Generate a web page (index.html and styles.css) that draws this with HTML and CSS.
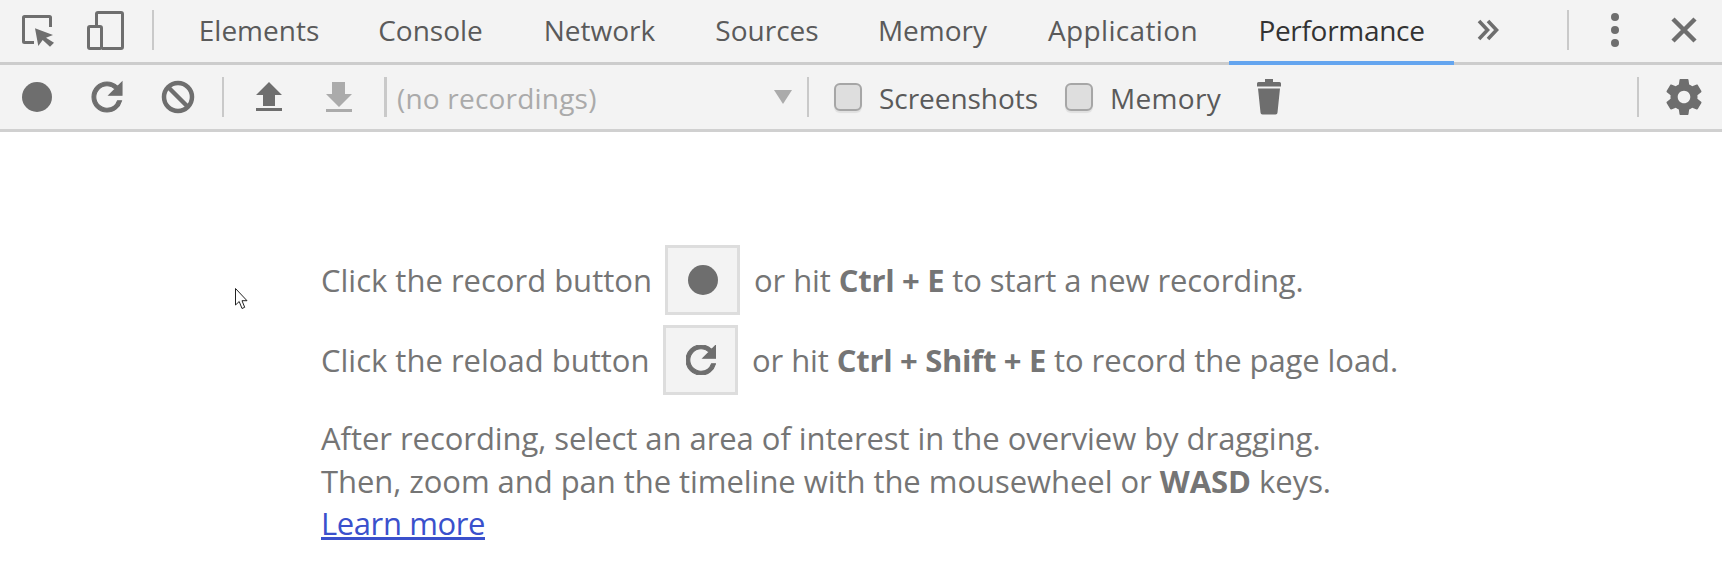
FILE: index.html
```html
<!DOCTYPE html>
<html lang="en">
<head>
<meta charset="utf-8">
<title>DevTools Performance</title>
<link rel="stylesheet" href="styles.css">
</head>
<body>
<header class="tabbar">
  <svg class="icon inspect" viewBox="0 0 40 40" width="40" height="40"><path class="line" d="M14 31.500H4.500A1 1 0 0 1 3.500 30.500V6.500A1 1 0 0 1 4.500 5.500H29.500A1 1 0 0 1 30.500 6.500V16"/><path class="fill" d="M15 17.300L33 24 26 26.700 34 31.700 30 35.700 22.700 29 18.300 35z"/></svg>
  <svg class="icon device" viewBox="0 0 40 40" width="40" height="40"><path class="line" d="M11.500 15V3A1.500 1.500 0 0 1 13 1.500H36A1.500 1.500 0 0 1 37.500 3V36A1.500 1.500 0 0 1 36 37.500H17"/><rect class="line" x="3.500" y="15.500" width="13" height="22" rx="1.500"/></svg>
  <span class="sep sep-head"></span>
  <nav class="tabs">
    <span class="tab">Elements</span>
    <span class="tab">Console</span>
    <span class="tab">Network</span>
    <span class="tab">Sources</span>
    <span class="tab">Memory</span>
    <span class="tab tab-wide">Application</span>
    <span class="tab active">Performance</span>
  </nav>
  <svg class="icon more" viewBox="0 0 24 24" width="24" height="24"><path class="line chev" d="M3 3l8.500 9L3 21M12 3l8.500 9L12 21"/></svg>
  <span class="sep sep-more"></span>
  <svg class="icon dots" viewBox="0 0 10 36" width="10" height="36"><circle class="fill" cx="5" cy="4" r="4"/><circle class="fill" cx="5" cy="17" r="4"/><circle class="fill" cx="5" cy="30" r="4"/></svg>
  <svg class="icon close" viewBox="0 0 26 26" width="26" height="26"><path class="line x" d="M2 2l22 22M24 2L2 24"/></svg>
</header>

<section class="toolbar">
  <svg class="icon t-record" viewBox="0 0 30 30" width="30" height="30"><circle class="fill" cx="15" cy="15" r="15"/></svg>
  <svg class="icon t-reload" viewBox="4 4 16 16" width="30" height="30"><path class="fill bold" d="M17.650 6.350A7.958 7.958 0 0 0 12 4c-4.420 0-7.990 3.580-7.990 8s3.570 8 7.990 8c3.730 0 6.840-2.550 7.730-6h-2.080A5.990 5.990 0 0 1 12 18c-3.310 0-6-2.690-6-6s2.690-6 6-6c1.660 0 3.140.690 4.220 1.780L13 11h7V4l-2.350 2.350z"/></svg>
  <svg class="icon t-clear" viewBox="0 0 32 32" width="32" height="32"><circle class="line ring" cx="16" cy="16" r="14"/><path class="line ring" d="M6 6l20 20"/></svg>
  <span class="sep sep-a"></span>
  <svg class="icon t-up" viewBox="0 0 26 29" width="26" height="29"><path class="fill" d="M13 0L26 13H19V24H7V13H0z"/><rect class="fill" y="26" width="26" height="3"/></svg>
  <svg class="icon t-down" viewBox="0 0 26 30" width="26" height="30"><path class="fill-off" d="M6 0H19V12H26L13 25 0 12H6z"/><rect class="fill-off" y="27" width="26" height="3"/></svg>
  <div class="select">
    <span class="select-text">(no recordings)</span>
    <span class="select-arrow"></span>
  </div>
  <span class="sep sep-b"></span>
  <label class="check check-a"><input type="checkbox"><span>Screenshots</span></label>
  <label class="check check-b"><input type="checkbox"><span class="check-wide">Memory</span></label>
  <svg class="icon t-trash" viewBox="0 0 24 36" width="24" height="36"><path class="fill" d="M8 0H16V3H22.500A1.500 1.500 0 0 1 24 4.500V7.500H0V4.500A1.500 1.500 0 0 1 1.500 3H8z"/><path class="fill" d="M1 9.500H23L20.500 33.500A2 2 0 0 1 18.500 35.500H5.500A2 2 0 0 1 3.500 33.500z"/></svg>
  <span class="sep sep-c"></span>
  <svg class="icon t-gear" viewBox="2.200 2 19.600 20" width="36" height="36"><path class="fill" d="M19.430 12.980c.04-.32.07-.64.07-.98s-.03-.66-.07-.98l2.110-1.650c.19-.15.24-.42.12-.64l-2-3.460c-.12-.22-.39-.3-.61-.22l-2.490 1c-.52-.4-1.080-.73-1.690-.98l-.38-2.650C14.460 2.180 14.250 2 14 2h-4c-.25 0-.46.18-.49.42l-.38 2.650c-.61.25-1.170.59-1.690.98l-2.490-1c-.23-.09-.49 0-.61.22l-2 3.460c-.13.22-.07.49.12.64l2.110 1.650c-.04.32-.07.65-.07.98s.03.66.07.98l-2.110 1.650c-.19.15-.24.42-.12.64l2 3.460c.12.22.39.3.61.22l2.490-1c.52.4 1.080.73 1.690.98l.38 2.650c.03.24.24.42.49.42h4c.25 0 .46-.18.49-.42l.38-2.650c.61-.25 1.170-.59 1.690-.98l2.490 1c.23.09.49 0 .61-.22l2-3.460c.12-.22.07-.49-.12-.64l-2.110-1.650zM12 15.500c-1.930 0-3.500-1.570-3.500-3.500s1.570-3.500 3.500-3.500 3.500 1.570 3.500 3.500-1.570 3.500-3.500 3.500z"/></svg>
</section>

<main class="landing">
  <div class="hint hint-record">
    <span class="lead">Click the record button</span>
    <span class="keybtn"><svg viewBox="0 0 30 30" width="30" height="30"><circle class="fill" cx="15" cy="15" r="15"/></svg></span>
    <span>or hit <b>Ctrl + E</b> to start a new recording.</span>
  </div>
  <div class="hint hint-reload">
    <span class="lead">Click the reload button</span>
    <span class="keybtn"><svg viewBox="4 4 16 16" width="30" height="30"><path class="fill bold" d="M17.650 6.350A7.958 7.958 0 0 0 12 4c-4.420 0-7.990 3.580-7.990 8s3.570 8 7.990 8c3.730 0 6.840-2.550 7.730-6h-2.080A5.990 5.990 0 0 1 12 18c-3.310 0-6-2.690-6-6s2.690-6 6-6c1.660 0 3.140.690 4.220 1.780L13 11h7V4l-2.350 2.350z"/></svg></span>
    <span>or hit <b>Ctrl + Shift + E</b> to record the page load.</span>
  </div>
  <p class="note">After recording, select an area of interest in the overview by dragging.<br>Then, zoom and pan the timeline with the mousewheel or <b>WASD</b> keys.<br><a href="#">Learn more</a></p>
</main>

<svg class="cursor" viewBox="0 0 13 22" width="13" height="22"><path d="M.5.500V17L4.200 13.500 7 20.500 9.700 19.300 7 12.700H12z"/></svg>
</body>
</html>
```
FILE: styles.css
```css
* { box-sizing: border-box; }
html, body { margin: 0; height: 100%; background: #fff; overflow: hidden; }
body { font-family: "Open Sans", "Liberation Sans", sans-serif; position: relative; }

.icon { display: block; flex: none; overflow: visible; }
.fill { fill: #6e6e6e; }
.fill.bold { stroke: #6e6e6e; stroke-width: .6; }
.fill-off { fill: #ababab; }
.line { fill: none; stroke: #6e6e6e; stroke-width: 3; }
.line.chev { stroke-width: 3.6; }
.line.x { stroke-width: 4.5; }
.line.ring { stroke-width: 4.5; }
.sep { display: block; flex: none; width: 2px; height: 40px; background: #c9c9c9; }

.tabbar { display: flex; align-items: center; height: 65px; background: #f3f3f3; border-bottom: 3px solid #ccc; }
.inspect { margin-left: 20px; }
.device { margin-left: 25px; margin-top: -1px; }
.sep-head { margin-left: 27px; margin-top: -2px; }
.tabs { display: grid; grid-template-columns: 178px 165px 173px 162px 169px 212px 225px; height: 65px; margin-left: 16px; align-self: flex-start; }
.tab { display: flex; align-items: center; justify-content: center; height: 65px; padding-bottom: 2px; font-size: 28px; color: #5a5a5a; border-bottom: 4px solid transparent; }
.tab-wide { letter-spacing: .35px; }
.tab.active { color: #333; letter-spacing: -.3px; border-bottom-color: #64a5ef; }
.more { margin-left: 22px; margin-top: -2px; }
.sep-more { margin-left: 67px; margin-top: -2px; }
.dots { margin-left: 41px; margin-top: -1px; }
.close { margin-left: 51px; margin-top: -3px; }

.toolbar { display: flex; align-items: center; height: 67px; padding-bottom: 1px; background: #f3f3f3; border-bottom: 3px solid #d0d0d0; color: #5a5a5a; font-size: 28px; }
.t-record { margin-left: 22px; }
.t-reload { margin-left: 40px; }
.t-clear { margin-left: 40px; }
.sep-a { margin-left: 28px; }
.t-up { margin-left: 32px; }
.t-down { margin-left: 44px; }
.select { display: flex; align-items: center; width: 416px; height: 40px; margin-left: 32px; border-left: 3px solid #c9c9c9; }
.select-text { margin-left: 10px; padding-top: 2px; flex: 1; color: #aaa; letter-spacing: .2px; }
.select-arrow { width: 0; height: 0; margin-right: 8px; border-left: 9px solid transparent; border-right: 9px solid transparent; border-top: 14px solid #ababab; }
.sep-b { margin-left: 7px; }
.check { display: flex; align-items: center; gap: 17px; letter-spacing: -.05px; }
.check span { padding-top: 2px; }
.check .check-wide { letter-spacing: .35px; }
.check input { appearance: none; flex: none; width: 28px; height: 28px; margin: 0; background: #dedede; border: 2.5px solid #a6a6a6; border-radius: 6px; box-shadow: 0 1.5px 1px rgba(0,0,0,.08); }
.check-a { margin-left: 25px; }
.check-b { margin-left: 27px; }
.t-trash { margin-left: 36px; }
.sep-c { margin-left: auto; }
.t-gear { margin-left: 27px; margin-right: 20px; }

.landing { padding: 113px 0 0 321px; color: #757575; font-size: 31px; letter-spacing: -.08px; }
.hint { display: flex; align-items: center; height: 70px; }
.hint-reload { margin-top: 10px; }
.lead { width: 344px; letter-spacing: 0; }
.keybtn { display: flex; align-items: center; justify-content: center; width: 75px; height: 70px; margin-right: 14px; background: #f3f3f3; border: 3px solid #ddd; }
.hint-reload .lead { width: 342px; }
.note { margin: 22px 0 0; line-height: 42.7px; letter-spacing: -.05px; }
.note a { color: #3a50cc; text-decoration: underline; letter-spacing: -.4px; }
b { font-weight: 700; letter-spacing: -.3px; }
.note b { letter-spacing: 0; }

.cursor { position: absolute; left: 235px; top: 288px; }
.cursor path { fill: #fff; stroke: #222; stroke-width: 1; }
```
